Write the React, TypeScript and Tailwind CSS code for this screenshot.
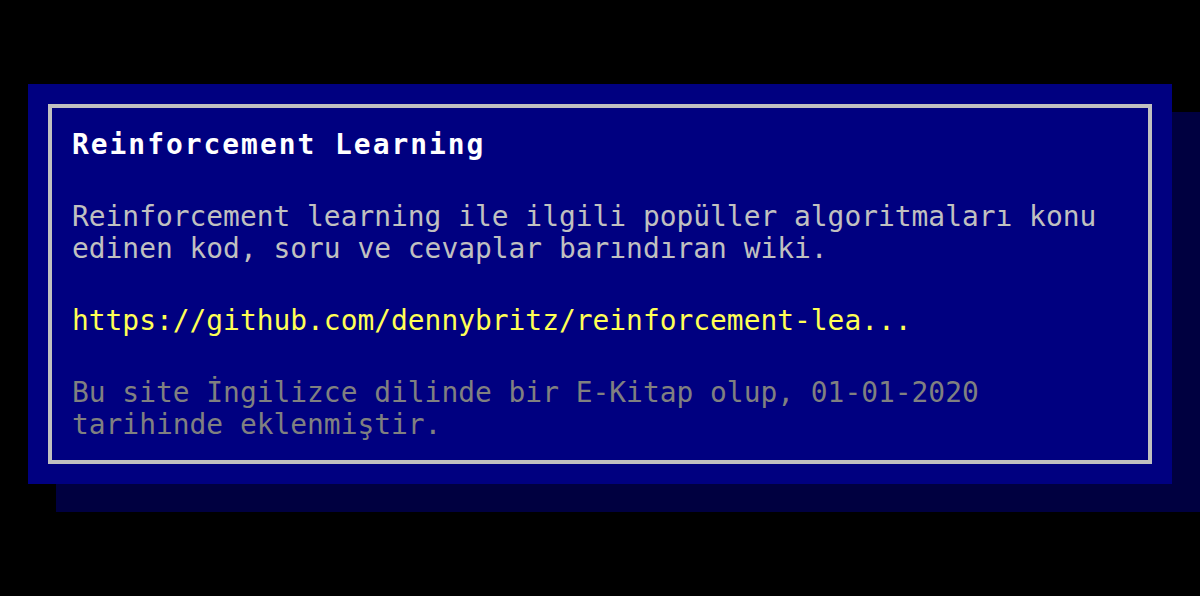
export default function App() {
  return (
    <div className="min-h-screen bg-black px-[28px] pt-[84px] font-['DejaVu_Sans_Mono',monospace] text-[27.9px] leading-[32px]">
      <div className="bg-[#000080] p-[20px] shadow-[28px_28px_0_#000040]">
        <div className="border-4 border-[#c0c0c0] px-[20px] pt-[21px] pb-[19px]">
          <h1 className="font-bold text-white tracking-[2px] mb-10">Reinforcement Learning</h1>
          <p className="text-[#c0c0c0] mb-10">
            Reinforcement learning ile ilgili popüller algoritmaları konu edinen kod, soru ve cevaplar barındıran wiki.
          </p>
          <p className="text-[#ffff55] mb-10">https://github.com/dennybritz/reinforcement-lea...</p>
          <p className="text-[#808080]">
            Bu site İngilizce dilinde bir E-Kitap olup, 01-01-2020 tarihinde eklenmiştir.
          </p>
        </div>
      </div>
    </div>
  )
}
